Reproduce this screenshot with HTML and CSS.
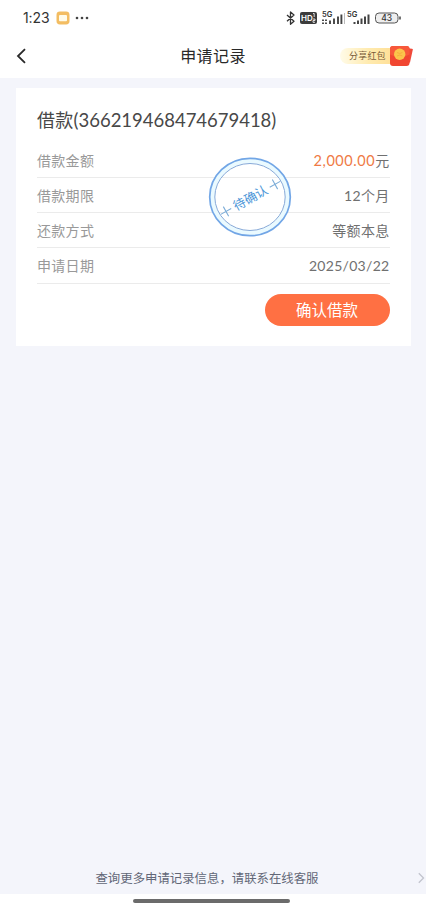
FILE: index.html
```html
<!DOCTYPE html>
<html lang="zh-CN">
<head>
<meta charset="utf-8">
<meta name="viewport" content="width=device-width, initial-scale=1">
<title>申请记录</title>
<link rel="stylesheet" href="styles.css">
</head>
<body>
<header class="top">
  <div class="status">
    <span class="time">1:23</span>
    <svg class="note" width="14" height="14" viewBox="0 0 14 14"><rect x=".5" y=".5" width="13" height="13" rx="3.4" fill="#f3bd62"/><rect x="3" y="4" width="8" height="6.2" rx="1" fill="#fffbe9"/></svg>
    <svg class="dots" width="14" height="4" viewBox="0 0 14 4" fill="#444"><circle cx="2" cy="2" r="1.3"/><circle cx="7" cy="2" r="1.3"/><circle cx="12" cy="2" r="1.3"/></svg>
    <svg class="system" width="118" height="18" viewBox="0 0 118 18">
      <path d="M2 6l7 6.300-3.500 3V3L9 6l-7 6.300" fill="none" stroke="#333" stroke-width="1.300" stroke-linejoin="round"/>
      <rect x="15" y="3" width="17" height="12" rx="2" fill="#3c3c3c"/>
      <text class="hd" x="16" y="12">HD</text>
      <path d="M28 4.500h1.200v3.500M28 10h2v1.500h-2v1.800h2" fill="none" stroke="#fff" stroke-width=".8"/>
      <text class="net" x="37" y="8">5G</text>
      <path d="M38 10.500v1.500M38 13.500v1.500M41 10.500v1.500M41 13.500v1.500M45 11.500V15M49 9.500V15M53 7.500V15M56.400 5.500V15" fill="none" stroke="#444" stroke-width="1.900"/>
      <path d="M59.500 4V15" stroke="#bbb"/>
      <text class="net" x="62" y="8">5G</text>
      <path d="M69.500 13v2M73 11.500V15M76.500 9.500V15M80 7.500V15M83.500 5.500V15" fill="none" stroke="#444" stroke-width="2"/>
      <rect x="90.500" y="4" width="22.500" height="10" rx="3.500" fill="#eee" stroke="#555"/>
      <path d="M115 7.500v3" stroke="#444" stroke-width="1.500"/>
      <text class="battery" x="101.700" y="12" text-anchor="middle">43</text>
    </svg>
  </div>
  <nav class="nav">
    <svg class="back" width="12" height="18" viewBox="0 0 12 18"><path d="M10 2.200L3 9l7 6.800" fill="none" stroke="#292929" stroke-width="1.800"/></svg>
    <h1>申请记录</h1>
    <div class="share">
      <span>分享红包</span>
      <svg width="25" height="22" viewBox="0 0 25 22">
        <path d="M16 3l7 .8c.8.100.900.500.800 1L21 17.500l-8 1z" fill="#f04a3b"/>
        <rect x="1" y="1" width="19.500" height="20" rx="3" fill="#f14631"/>
        <path d="M1 4q0-3 3-3h13.500q3 0 3 3v5.500q-9.500 5-19.500 0z" fill="#f7583a"/>
        <circle cx="10.700" cy="9.200" r="5.700" fill="#fbc54b"/>
        <path d="M8 7.500q2.700 2 5.400 0M8 11q2.700-2 5.400 0" fill="none" stroke="#f8ad3e"/>
      </svg>
    </div>
  </nav>
</header>
<main>
  <section class="card">
    <h2>借款<span>(366219468474679418)</span></h2>
    <dl>
      <div><dt>借款金额</dt><dd><span class="amount">2,000.00</span>元</dd></div>
      <div><dt>借款期限</dt><dd>12个月</dd></div>
      <div><dt>还款方式</dt><dd>等额本息</dd></div>
      <div><dt>申请日期</dt><dd class="date">2025/03/22</dd></div>
    </dl>
    <button type="button">确认借款</button>
    <svg class="stamp" width="84" height="82" viewBox="0 0 84 82">
      <ellipse cx="42" cy="41" rx="38" ry="36.500" fill="none" stroke="#eafaff" stroke-width="5"/>
      <ellipse cx="42" cy="41" rx="40.300" ry="38.700" fill="none" stroke="#72a6e6" stroke-width="1.700"/>
      <ellipse cx="42" cy="41" rx="35.200" ry="33.500" fill="none" stroke="#86a9d8" stroke-width="1"/>
      <g transform="rotate(-29 42 41)">
        <path d="M8 42h12M14 36.500v11M64 42h12M70 36.500v11" stroke="#7dadd8" stroke-width="1.100"/>
        <text x="42" y="46.500" text-anchor="middle">待确认</text>
      </g>
    </svg>
  </section>
</main>
<footer>
  <div class="help"><span>查询更多申请记录信息，请联系在线客服</span>
    <svg width="8" height="12" viewBox="0 0 8 12"><path d="M.8 1.200L5.500 6 .8 10.800" fill="none" stroke="#c2c4cd" stroke-width="1.300"/></svg>
  </div>
  <div class="gesture"><i></i></div>
</footer>
</body>
</html>
```
FILE: styles.css
```css
* { box-sizing: border-box; }
body {
  margin: 0;
  height: 910px;
  display: flex;
  flex-direction: column;
  overflow: hidden;
  background: #f4f5fb;
  color: #707070;
  font-family: Lato, "Noto Sans CJK SC", sans-serif;
}
h1, h2, dl, dd { margin: 0; font-weight: 400; }
.top { height: 78px; background: #fff; }
.status { height: 36px; display: flex; align-items: center; padding: 0 23px 0 23px; }
.time { width: 27px; color: #333; font: 400 14px/18px Inter, sans-serif; letter-spacing: -.1px; white-space: nowrap; }
.note { margin-left: 6px; }
.dots { margin-left: 5px; }
.system { margin-left: auto; }
.system text { font-family: Inter, sans-serif; font-weight: 600; fill: #333; }
.system .hd { font-size: 8px; fill: #fff; }
.system .net { font-size: 7.500px; }
.system .battery { font-size: 8.500px; font-weight: 500; }
.nav { height: 40px; display: grid; grid-template-columns: 71px 1fr 75px; align-items: center; padding: 0 11px 0 15px; }
.nav h1 { text-align: center; color: #292929; font-size: 16px; line-height: 24px; letter-spacing: .4px; }
.share { display: flex; align-items: center; height: 22px; }
.share span { flex: none; height: 16px; width: 51px; padding-left: 9px; border-radius: 8px 0 0 8px; background: linear-gradient(90deg, #fffbe8, #ffebb0 55%, #ffe098); color: #785b38; font-size: 9px; line-height: 16px; letter-spacing: .2px; }
.share svg { flex: none; margin-left: -2px; }
main { flex: 1; padding: 10px 15.500px 0 16px; }
.card { position: relative; height: 258px; padding: 20px 21px 0; background: #fff; }
.card h2 { height: 25px; color: #484848; font-size: 18px; line-height: 25px; letter-spacing: .3px; white-space: nowrap; }
.card h2 span { font-size: 18.500px; letter-spacing: -.02px; }
dl { padding-top: 9.500px; }
dl div { display: flex; justify-content: space-between; height: 35.300px; border-bottom: 1px solid #ebebeb; font-size: 14px; line-height: 35px; letter-spacing: .3px; }
dt { color: #999; }
.amount { color: #ef7a45; font-size: 14.500px; letter-spacing: .55px; }
.card button { display: block; width: 125px; height: 32px; margin: 10px 0 0 auto; border: 0; border-radius: 16px; background: #ff7043; color: #fff; font: 400 15.500px/30px "Noto Sans CJK SC", sans-serif; padding: 0 0 2px; }
.stamp { position: absolute; left: 192px; top: 68px; }
.stamp text { font: 400 12.500px "Noto Sans CJK SC", sans-serif; fill: #4c96d8; }
.help { display: grid; grid-template-columns: 1fr 8px; align-items: center; height: 33px; background: #f4f5fb; color: #626777; font-size: 12.400px; text-align: center; }
.help span { padding-right: 4px; }
.gesture { height: 16px; background: #fff; display: flex; justify-content: center; align-items: center; }
.gesture i { width: 157px; height: 4px; border-radius: 2px; background: #6b6b6b; margin-right: 3px; margin-top: -2px; }
```
